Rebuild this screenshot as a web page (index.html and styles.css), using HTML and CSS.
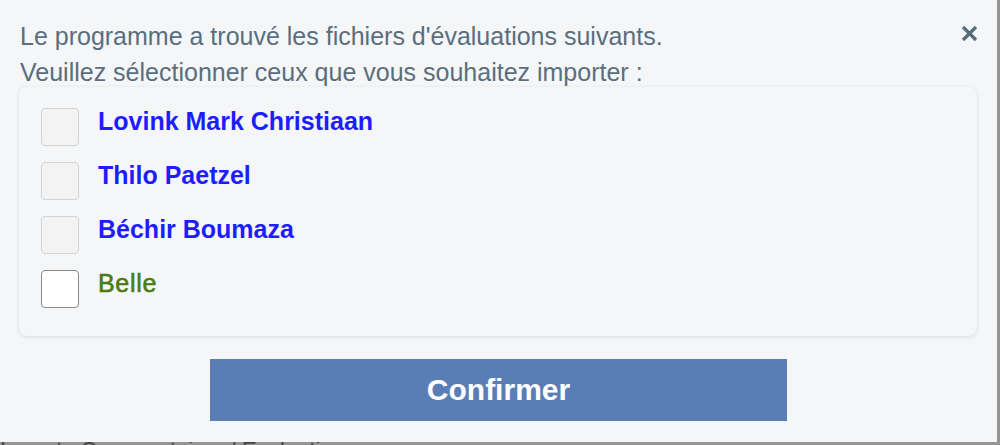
FILE: index.html
```html
<!DOCTYPE html>
<html lang="fr">
<head>
<meta charset="utf-8">
<link rel="stylesheet" href="styles.css">
</head>
<body>
<div class="screen">
  <div class="dialog">
    <div class="header">
      <div class="intro">
        <div class="line">Le programme a trouvé les fichiers d'évaluations suivants.</div>
        <div class="line">Veuillez sélectionner ceux que vous souhaitez importer :</div>
      </div>
      <button class="close" aria-label="Fermer">
        <svg width="17" height="17" viewBox="0 0 17 17"><path d="M2 2L15 15M15 2L2 15" stroke="#546e7a" stroke-width="3.3" stroke-linecap="butt"/></svg>
      </button>
    </div>
    <div class="card">
      <label class="row"><span class="box disabled"></span><span class="name blue">Lovink Mark Christiaan</span></label>
      <label class="row"><span class="box disabled"></span><span class="name blue">Thilo Paetzel</span></label>
      <label class="row"><span class="box disabled"></span><span class="name blue">Béchir Boumaza</span></label>
      <label class="row"><span class="box"></span><span class="name green">Belle</span></label>
    </div>
    <div class="actions">
      <button class="confirm">Confirmer</button>
    </div>
  </div>
  <div class="under">Import : Commentaires / Évaluations :</div>
</div>
</body>
</html>
```
FILE: styles.css
```css
html, body {
  margin: 0;
  padding: 0;
  width: 1000px;
  height: 445px;
  overflow: hidden;
  background: #959595;
  font-family: "Liberation Sans", Arial, sans-serif;
}
.screen {
  display: flex;
  flex-direction: column;
  height: 445px;
}
.dialog {
  width: 997px;
  height: 442px;
  background: #f5f6f8;
  box-sizing: border-box;
  padding: 18px 19px 0 19px;
  flex: none;
}
.header {
  display: flex;
  justify-content: space-between;
  align-items: flex-start;
}
.intro {
  color: #5a6e7e;
  font-size: 25px;
  padding-left: 1px;
}
.line {
  line-height: 36px;
  height: 36px;
}
.close {
  border: 0;
  background: none;
  padding: 0;
  margin: 7px 0 0 0;
  width: 17px;
  height: 17px;
  display: block;
}
.close svg { display: block; }
.card {
  margin-top: -3px;
  width: 958px;
  height: 249px;
  box-sizing: border-box;
  border-radius: 8px;
  background: #f5f6f8;
  box-shadow: 0 1px 4px rgba(0,0,0,0.12);
  padding: 21px 0 0 22px;
  display: flex;
  flex-direction: column;
  gap: 16px;
}
.row {
  display: flex;
  align-items: center;
  gap: 19px;
  height: 38px;
}
.box {
  width: 38px;
  height: 38px;
  box-sizing: border-box;
  border-radius: 4px;
  border: 1.5px solid #8a8a8a;
  background: #ffffff;
  flex: none;
}
.box.disabled {
  border-color: #d2d2d2;
  background: #f3f3f3;
}
.name {
  font-size: 25px;
  font-weight: bold;
  margin-top: -12px;
}
.name.blue { color: #1d1dff; }
.name.green {
  color: #4a7c0f;
  font-weight: normal;
  letter-spacing: 0.7px;
  -webkit-text-stroke: 0.6px #4a7c0f;
}
.actions {
  display: flex;
  justify-content: center;
  margin-top: 23px;
}
.confirm {
  width: 577px;
  height: 62px;
  border: 0;
  background: #5b7db6;
  color: #ffffff;
  font-family: "Liberation Sans", Arial, sans-serif;
  font-size: 30px;
  font-weight: bold;
  padding: 0;
}
.under {
  height: 3px;
  color: #444;
  font-size: 22px;
  line-height: 16px;
  padding-left: 0;
  overflow: hidden;
}
```
